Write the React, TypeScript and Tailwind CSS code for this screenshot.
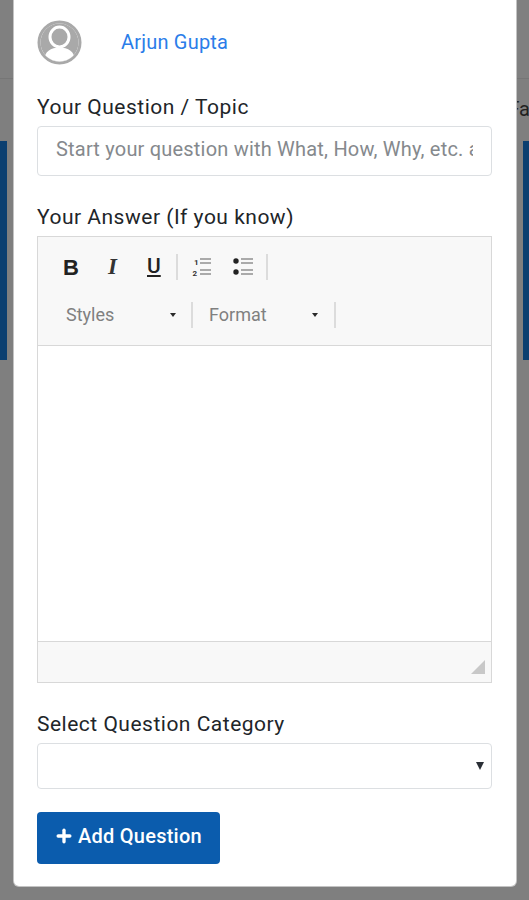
import { Plus } from 'lucide-react';

function Avatar() {
  return (
    <svg width="45" height="45" viewBox="0 0 45 45">
      <defs>
        <clipPath id="avatar-clip">
          <circle cx="22.5" cy="22.5" r="19" />
        </clipPath>
      </defs>
      <circle cx="22.5" cy="22.5" r="20.5" fill="#ffffff" stroke="#a9a9a9" strokeWidth="3" />
      <g clipPath="url(#avatar-clip)">
        <rect x="0" y="0" width="45" height="45" fill="#a9a9a9" />
        <ellipse cx="22.5" cy="17" rx="9.5" ry="10" fill="#a9a9a9" stroke="#ffffff" strokeWidth="3" />
        <path d="M7 42 C7 31 14 27.5 22.5 27.5 C31 27.5 38 31 38 42 Z" fill="#ffffff" />
      </g>
    </svg>
  );
}

function ListOrdered() {
  return (
    <svg width="20" height="22" viewBox="0 0 20 22">
      <text x="2" y="9" fontSize="8" fontWeight="700" fill="#333" fontFamily="Roboto, sans-serif">1</text>
      <text x="0.5" y="20" fontSize="8" fontWeight="700" fill="#333" fontFamily="Roboto, sans-serif">2</text>
      <rect x="8" y="2" width="11" height="2" fill="#aaa" />
      <rect x="8" y="6" width="11" height="2" fill="#aaa" />
      <rect x="8" y="13" width="11" height="2" fill="#aaa" />
      <rect x="8" y="17" width="11" height="2" fill="#aaa" />
    </svg>
  );
}

function ListBullet() {
  return (
    <svg width="20" height="22" viewBox="0 0 20 22">
      <circle cx="3" cy="5" r="2.7" fill="#222" />
      <circle cx="3" cy="16" r="2.7" fill="#222" />
      <rect x="8" y="2" width="12" height="2" fill="#aaa" />
      <rect x="8" y="6" width="12" height="2" fill="#aaa" />
      <rect x="8" y="13" width="12" height="2" fill="#aaa" />
      <rect x="8" y="17" width="12" height="2" fill="#aaa" />
    </svg>
  );
}

function Caret() {
  return <span className="w-0 h-0 border-x-[3.5px] border-x-transparent border-t-[4px] border-t-[#2a2a2a]" />;
}

function Separator({ className }: { className: string }) {
  return <span className={`w-[2px] h-[26px] bg-[#dcdcdc] ${className}`} />;
}

export default function App() {
  return (
    <div className="relative w-[529px] h-[900px] overflow-hidden bg-[#7f7f7f] font-['Roboto',sans-serif]">
      {/* dimmed page behind the modal */}
      <div className="h-[79px] border-b border-[#767676] bg-[#808080]" />
      <div className="h-[62px] bg-[#7f7f7f] flex justify-end">
        <span className="text-[20px] leading-[60px] text-[#222] mr-[-1px] self-start">Fa</span>
      </div>
      <div className="h-[219px] bg-[#0b3f70] pl-[7px] pr-[6px]">
        <div className="h-full bg-[#7f7f7f]" />
      </div>

      {/* modal */}
      <div className="absolute left-[13px] right-[12px] top-[-20px] h-[907px] bg-white rounded-[6px] border border-[#6a6a6a]/40 pt-[38px] pl-[23px] pr-[24px]">
        <div className="flex items-center h-[46px]">
          <Avatar />
          <span className="ml-[39px] text-[20px] tracking-[0.2px] text-[#2b7de9]">Arjun Gupta</span>
        </div>

        <label className="block mt-[28px] text-[21px] leading-[28px] tracking-[0.5px] text-[#212529]">Your Question / Topic</label>
        <div className="mt-[5px] h-[50px] border border-[#dcdfe2] rounded-[4px] flex items-center pl-[18px] pr-[18px] pb-[4px] overflow-hidden">
          <span className="text-[20px] text-[#85898d] whitespace-nowrap overflow-hidden tracking-[0.2px]">Start your question with What, How, Why, etc. and end it with ?</span>
        </div>

        <label className="block mt-[27px] text-[21px] leading-[28px] tracking-[0.5px] text-[#212529]">Your Answer (If you know)</label>
        <div className="mt-[5px] border border-[#d8d8d8]">
          <div className="h-[109px] bg-[#f8f8f8] border-b border-[#d8d8d8] pl-[25px]">
            <div className="flex items-center h-[60px]">
              <span className="w-[16px] text-[22px] font-bold text-[#222] font-['Liberation_Sans',sans-serif]">B</span>
              <span className="ml-[29px] w-[14px] text-[23px] italic font-bold text-[#333] font-['Liberation_Serif',serif]">I</span>
              <span className="ml-[25px] w-[18px] text-[21px] font-medium underline underline-offset-2 text-[#222]">U</span>
              <Separator className="ml-[11px]" />
              <span className="ml-[14px] flex"><ListOrdered /></span>
              <span className="ml-[21px] flex"><ListBullet /></span>
              <Separator className="ml-[13px]" />
            </div>
            <div className="flex items-center h-[35px]">
              <span className="ml-[3px] w-[104px] text-[18px] text-[#808080]">Styles</span>
              <Caret />
              <Separator className="ml-[15px]" />
              <span className="ml-[16px] w-[103px] text-[18px] text-[#808080]">Format</span>
              <Caret />
              <Separator className="ml-[16px]" />
            </div>
          </div>
          <div className="h-[295px] bg-white" />
          <div className="relative h-[41px] bg-[#f8f8f8] border-t border-[#d8d8d8]">
            <svg className="absolute right-[6px] bottom-[8px]" width="14" height="14" viewBox="0 0 14 14">
              <path d="M14 0 L14 14 L0 14 Z" fill="#c8c8c8" />
            </svg>
          </div>
        </div>

        <label className="block mt-[27px] text-[21px] leading-[28px] tracking-[0.5px] text-[#212529]">Select Question Category</label>
        <div className="mt-[5px] h-[46px] border border-[#dcdfe2] rounded-[4px] flex items-center justify-end pr-[7px]">
          <span className="w-0 h-0 border-x-[4px] border-x-transparent border-t-[8px] border-t-[#2a2f36]" />
        </div>

        <button className="mt-[23px] w-[183px] h-[52px] bg-[#0b5cad] rounded-[4px] flex items-center pl-[17px] pb-[4px] text-white text-[20px] font-medium tracking-[0.25px]">
          <Plus className="w-[20px] h-[20px] mr-[4px]" strokeWidth={4} />
          Add Question
        </button>
      </div>
    </div>
  );
}
